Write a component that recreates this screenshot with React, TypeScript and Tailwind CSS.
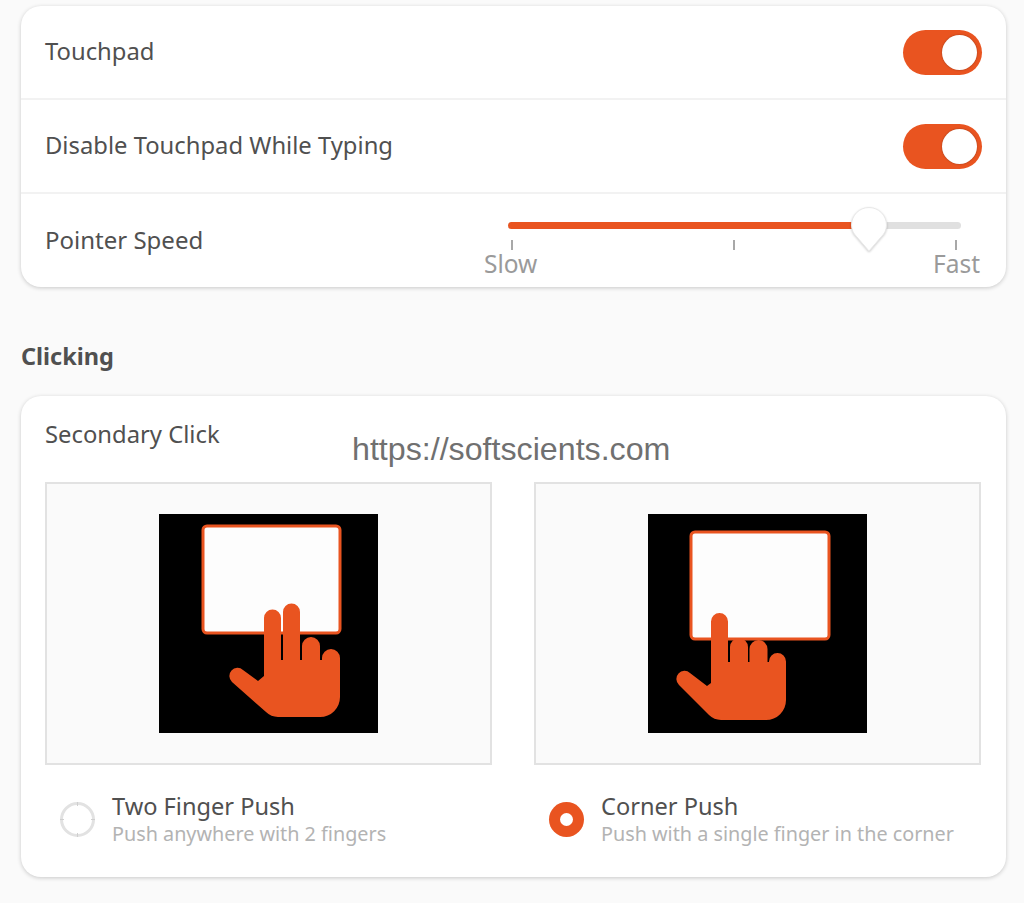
const ORANGE = "#E95420";

function Toggle() {
  return (
    <div className="flex h-[45px] w-[79px] items-center justify-end rounded-full bg-[#E95420] pr-[5px]">
      <div className="h-[35px] w-[35px] rounded-full bg-white shadow-[0_0_2px_rgba(0,0,0,0.35)]" />
    </div>
  );
}

function PointerSlider() {
  return (
    <div className="relative w-[498px] pr-[2px] pt-[28px]">
      <div className="ml-[24px] flex h-[7px] w-[453px] overflow-hidden rounded-full bg-[#e0e0e0]">
        <div className="h-full w-[350px] bg-[#E95420]" />
      </div>
      <div className="ml-[27px] mt-[11px] flex w-[446px] justify-between">
        <div className="h-[10px] w-[2px] bg-[#a8a8a8]" />
        <div className="h-[10px] w-[2px] bg-[#a8a8a8]" />
        <div className="h-[10px] w-[2px] bg-[#a8a8a8]" />
      </div>
      <div className="flex justify-between text-[24.5px] leading-[28px] text-[#9a9a9a]">
        <span>Slow</span>
        <span>Fast</span>
      </div>
      {/* slider thumb */}
      <svg className="absolute left-[366px] top-[12px] drop-shadow-[0_1px_1px_rgba(0,0,0,0.2)]" width="38" height="48" viewBox="0 0 38 48">
        <path
          d="M19 1.500a17.500 17.500 0 0 1 17.500 17.500c0 5-2 8.500-5 11.500L19 45 6.500 30.500C3.500 27.500 1.500 24 1.500 19A17.500 17.500 0 0 1 19 1.500z"
          fill="#fff"
          stroke="#e8e8e8"
          strokeWidth="1"
        />
      </svg>
    </div>
  );
}

function TwoFingerArt() {
  return (
    <svg width="219" height="219" viewBox="0 0 219 219">
      <rect width="219" height="219" fill="#000" />
      <rect x="44" y="12" width="137" height="107" rx="4" fill="#fdfdfd" stroke={ORANGE} strokeWidth="3" />
      <path
        d="M105 104a8.500 8.500 0 0 1 17 0V146h2V98a8.500 8.500 0 0 1 17 0V146h2V132a9 9 0 0 1 18 0V146h2V144a9 9 0 0 1 18 0V183a20 20 0 0 1-20 20H119a18 18 0 0 1-12-5L73 168a8 8 0 0 1 11-12L99 167l6-5z"
        fill={ORANGE}
      />
    </svg>
  );
}

function OneFingerArt() {
  return (
    <svg width="219" height="219" viewBox="0 0 219 219">
      <rect width="219" height="219" fill="#000" />
      <rect x="43" y="18" width="138" height="107" rx="4" fill="#fdfdfd" stroke={ORANGE} strokeWidth="3" />
      <path
        d="M63 107.500a8.500 8.500 0 0 1 17 0V148h2V133a9 9 0 0 1 18 0V148h1.500V135a9 9 0 0 1 18 0V148h1.500V147.500a8.500 8.500 0 0 1 17 0V186a20 20 0 0 1-20 20H73a18 18 0 0 1-12-5L31 171a8 8 0 0 1 11-12L59 172l4-3z"
        fill={ORANGE}
      />
    </svg>
  );
}

function ClickOption({
  title,
  hint,
  selected,
  children,
}: {
  title: string;
  hint: string;
  selected?: boolean;
  children: React.ReactNode;
}) {
  return (
    <div>
      <div className="flex h-[283px] items-center justify-center border-2 border-[#e2e2e2] bg-[#fafafa]">
        {children}
      </div>
      <div className="mt-[25px] flex items-center pl-[15px]">
        {selected ? (
          <div className="flex h-[35px] w-[35px] items-center justify-center rounded-full bg-[#E95420]">
            <div className="h-[13px] w-[13px] rounded-full bg-white" />
          </div>
        ) : (
          <svg width="35" height="35" viewBox="0 0 35 35">
            <circle cx="17.500" cy="17.500" r="16" fill="none" stroke="#e2e2e2" strokeWidth="3" />
            <path d="M17.500 0v4M17.500 31v4M0 17.500h4M31 17.500h4" stroke="#cfcfcf" strokeWidth="1" />
          </svg>
        )}
        <div className="ml-[17px] mt-[2px]">
          <div className="text-[23.6px] leading-[28px] text-[#505050]">{title}</div>
          <div className="text-[19.8px] leading-[28px] text-[#b3b3b3]">{hint}</div>
        </div>
      </div>
    </div>
  );
}

export default function App() {
  return (
    <div className="relative min-h-[903px] bg-[#fafafa] pl-[21px] pr-[18px] pt-[6px] font-['Noto_Sans',sans-serif] text-[#505050]">
      <div className="rounded-[20px] bg-white shadow-[0_1px_4px_rgba(0,0,0,0.2)]">
        <div className="flex h-[94px] items-center justify-between border-b-2 border-[#f2f2f2] px-[24px] text-[23.8px]">
          <span>Touchpad</span>
          <Toggle />
        </div>
        <div className="flex h-[94px] items-center justify-between border-b-2 border-[#f2f2f2] px-[24px] text-[23.8px]">
          <span className="-mt-[1px]">Disable Touchpad While Typing</span>
          <Toggle />
        </div>
        <div className="flex h-[93px] justify-between px-[24px] text-[24px]">
          <span className="mt-[28px]">Pointer Speed</span>
          <PointerSlider />
        </div>
      </div>

      <h2 className="mb-[22px] mt-[51px] text-[23.5px] font-bold leading-[36px]">Clicking</h2>

      <div className="h-[481px] rounded-[20px] bg-white px-[24px] pt-[21px] shadow-[0_1px_4px_rgba(0,0,0,0.2)]">
        <div className="text-[23.8px] leading-[34px]">Secondary Click</div>
        <div className="mt-[31px] grid w-[936px] grid-cols-2 gap-[42px]">
          <ClickOption title="Two Finger Push" hint="Push anywhere with 2 fingers">
            <TwoFingerArt />
          </ClickOption>
          <ClickOption title="Corner Push" hint="Push with a single finger in the corner" selected>
            <OneFingerArt />
          </ClickOption>
        </div>
      </div>

      {/* watermark over the page */}
      <div className="absolute left-[352px] top-[431px] font-['Liberation_Sans',sans-serif] text-[32.2px] leading-[36px] text-[#707070]">
        https://softscients.com
      </div>
    </div>
  );
}
